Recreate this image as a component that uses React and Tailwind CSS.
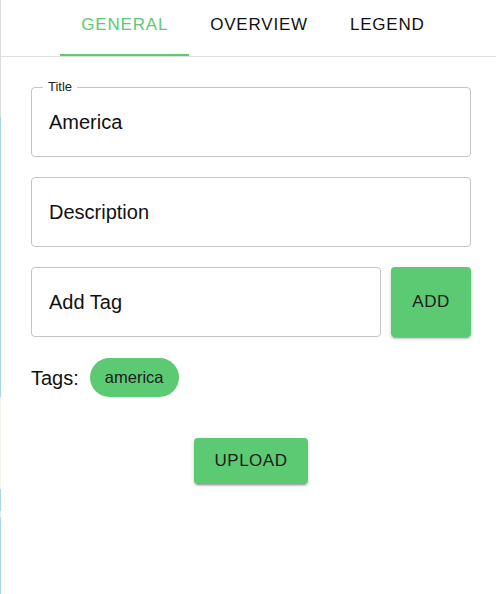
import React from 'react'

const font = { fontFamily: '"Liberation Sans", Arial, sans-serif' }

const Tab = ({ label, active }) => (
  <div className="relative flex h-[56px] items-center px-[21px] pb-[6px]">
    <span
      className={`text-[17px] tracking-[0.8px] ${active ? 'text-[#5cca73]' : 'text-[#111]'}`}
    >
      {label}
    </span>
    {active && <div className="absolute bottom-0 left-0 right-0 h-[2px] bg-[#5cca73]" />}
  </div>
)

const Field = ({ label, value, className = '' }) => (
  <div className={`relative flex h-[70px] items-center rounded-[4px] border border-[#c4c4c4] px-[17px] ${className}`}>
    {label && (
      <span className="absolute left-[11px] top-[-9px] bg-white px-[5px] text-[13px] leading-[16px] text-[#222]">
        {label}
      </span>
    )}
    <span className="text-[20px] text-[#111]">{value}</span>
  </div>
)

export default function App() {
  return (
    <div className="flex h-[594px] w-[496px] bg-white" style={font}>
      {/* left edge strip */}
      <div className="flex w-[1px] flex-col">
        <div className="h-[117px] bg-[#dcdcdc]" />
        <div className="h-[280px] bg-[#a9d6e3]" />
        <div className="h-[92px] bg-[#f3f3ec]" />
        <div className="h-[22px] bg-[#a9d6e3]" />
        <div className="h-[6px] bg-[#e8eef0]" />
        <div className="flex-1 bg-[#a9d6e3]" />
      </div>

      <div className="flex flex-1 flex-col">
        {/* Tabs */}
        <div className="flex justify-center border-b border-[#e0e0e0] pl-[9px]">
          <Tab label="GENERAL" active />
          <Tab label="OVERVIEW" />
          <Tab label="LEGEND" />
        </div>

        {/* Form */}
        <div className="flex flex-col gap-[20px] pl-[30px] pr-[25px] pt-[30px]">
          <Field label="Title" value="America" />
          <Field value="Description" />
          <div className="flex gap-[10px]">
            <Field value="Add Tag" className="flex-1" />
            <button
              className="flex h-[70px] w-[80px] items-center justify-center rounded-[4px] bg-[#5cca73] text-[17px] tracking-[0.5px] text-[#1a1a1a]"
              style={{ boxShadow: '0 3px 1px -2px rgba(0,0,0,.2), 0 2px 2px 0 rgba(0,0,0,.14), 0 1px 5px 0 rgba(0,0,0,.12)' }}
            >
              ADD
            </button>
          </div>
          <div className="flex items-center gap-[11px] pt-[1px]">
            <span className="text-[20px] text-[#111]">Tags:</span>
            <span className="flex h-[39px] items-center rounded-full bg-[#5cca73] px-[15px] text-[16.5px] text-[#1a1a1a]">
              america
            </span>
          </div>
          <div className="flex justify-center pt-[21px]">
            <button
              className="flex h-[46px] w-[114px] items-center justify-center rounded-[4px] bg-[#5cca73] text-[17px] tracking-[0.5px] text-[#1a1a1a]"
              style={{ boxShadow: '0 3px 1px -2px rgba(0,0,0,.2), 0 2px 2px 0 rgba(0,0,0,.14), 0 1px 5px 0 rgba(0,0,0,.12)' }}
            >
              UPLOAD
            </button>
          </div>
        </div>
      </div>
    </div>
  )
}
